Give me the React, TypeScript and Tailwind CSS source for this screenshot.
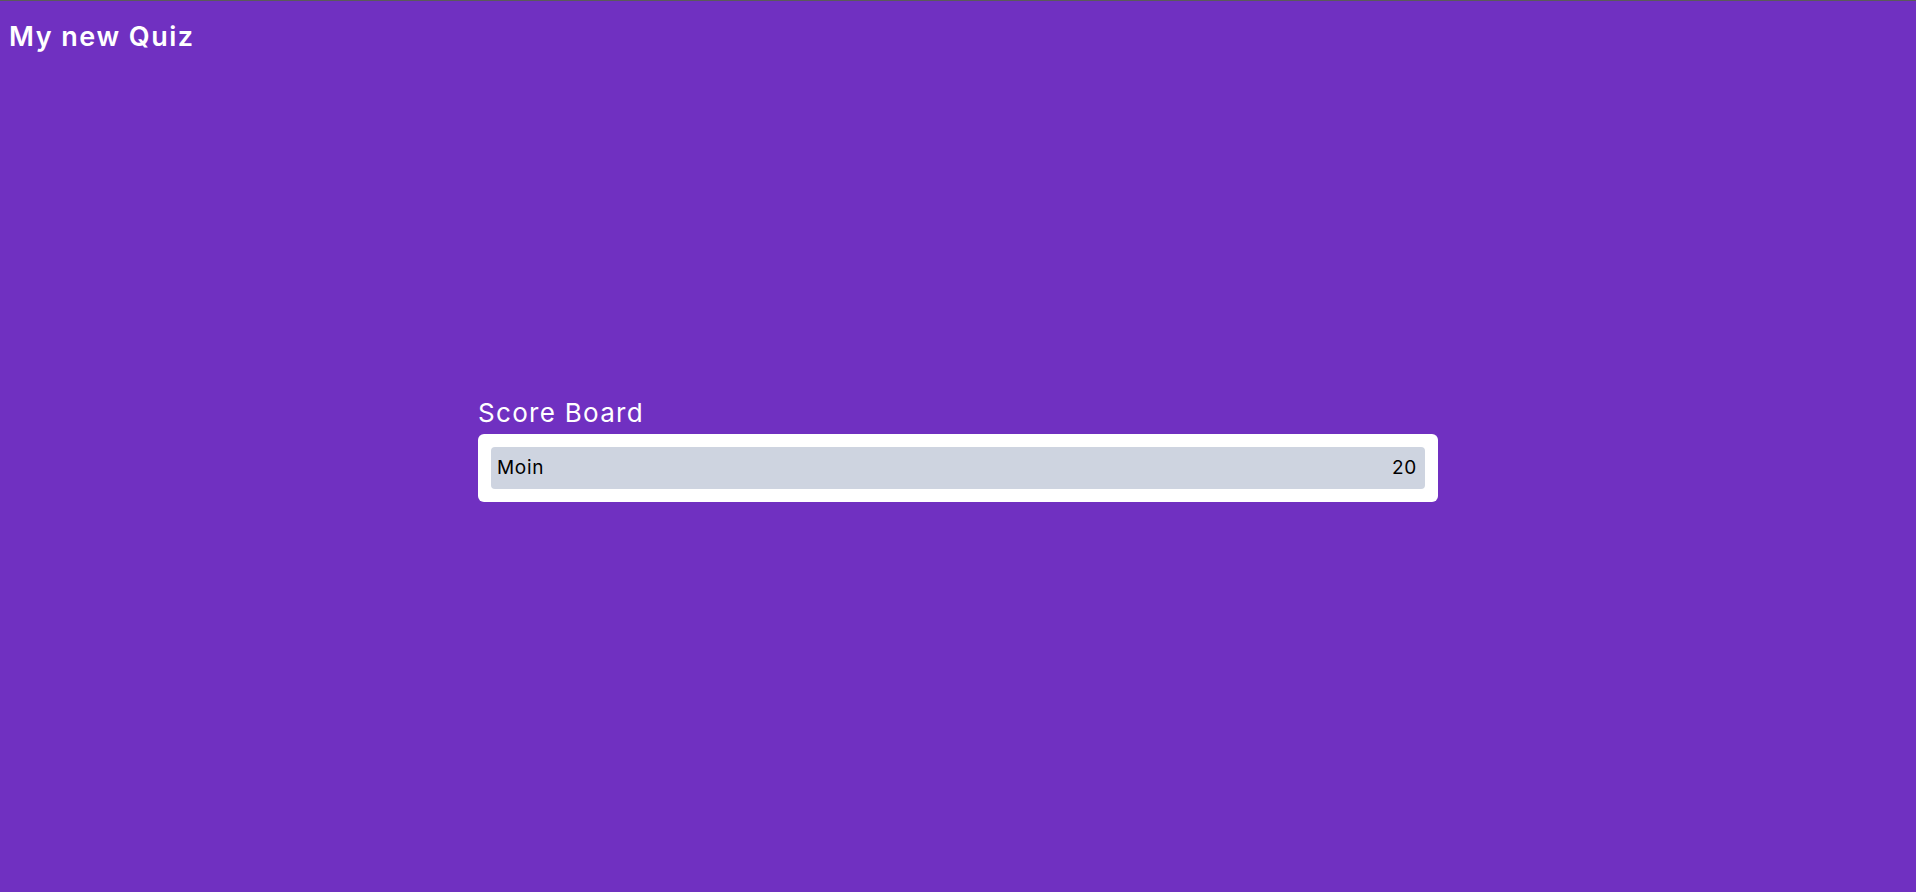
const scores = [{ name: "Moin", points: 20 }];

export default function App() {
  return (
    <div className="flex min-h-screen flex-col border-t border-[#5a5a5a] bg-[#7030c1] font-['Inter','Liberation_Sans',sans-serif] text-white">
      <header className="px-[9px] pt-[18px]">
        <h1 className="text-[27px] leading-[36px] font-semibold tracking-[1.5px]">My new Quiz</h1>
      </header>
      <main className="flex justify-center pt-[342px]">
        <section className="w-[960px]">
          <h2 className="text-[26px] leading-[32px] font-normal tracking-[1.3px]">Score Board</h2>
          <div className="mt-[5px] rounded-md bg-white p-[13px]">
            <ul className="flex flex-col gap-2">
              {scores.map((s) => (
                <li
                  key={s.name}
                  className="flex h-[42px] items-center justify-between rounded bg-[#ced4e0] px-[6px] text-[19px] tracking-[0.7px] text-black"
                >
                  <span>{s.name}</span>
                  <span className="pr-[2px]">{s.points}</span>
                </li>
              ))}
            </ul>
          </div>
        </section>
      </main>
    </div>
  );
}
